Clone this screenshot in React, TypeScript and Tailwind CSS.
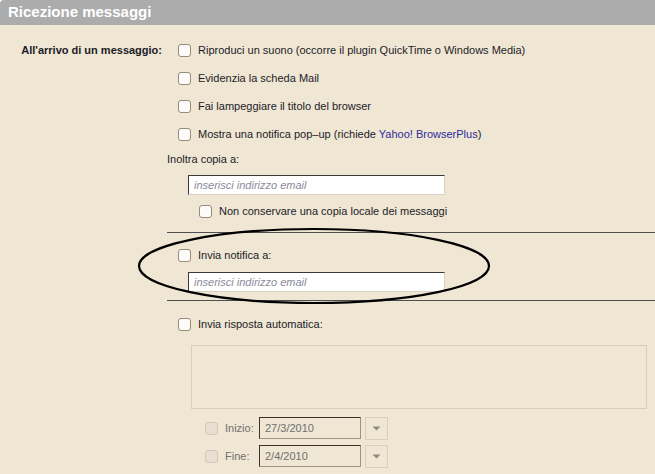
import React from 'react';

const font = { fontFamily: '"Liberation Sans", Arial, sans-serif' };

const Check = ({ disabled = false }: { disabled?: boolean }) => (
  <span
    className={
      disabled
        ? 'inline-block h-[13px] w-[13px] shrink-0 rounded-[3px] border border-[#d2c8b8] bg-[#e8dfd2]'
        : 'inline-block h-[13px] w-[13px] shrink-0 rounded-[3px] border border-[#968a79] bg-[#fdfcfa]'
    }
  />
);

const CheckRow = ({ children }: { children: React.ReactNode }) => (
  <div className="flex h-[28px] items-center gap-[7px] pl-[11px]">
    <Check />
    <span>{children}</span>
  </div>
);

const EmailInput = () => (
  <div className="ml-[21px] flex h-[20px] w-[257px] items-center border-t border-l border-t-[#3a3a3a] border-l-[#3a3a3a] border-r border-b border-r-[#d9d2c4] border-b-[#d9d2c4] bg-white pl-[5px] text-[11px] italic text-[#8a8a9a]">
    inserisci indirizzo email
  </div>
);

const DateRow = ({ label, value }: { label: string; value: string }) => (
  <div className="flex h-[28px] items-center pl-[38px]">
    <Check disabled />
    <span className="ml-[7px] w-[34px] text-[#707070]">{label}</span>
    <div className="flex h-[22px] w-[102px] items-start border-t border-l border-t-[#3a3328] border-l-[#3a3328] border-r border-b border-r-[#9c9383] border-b-[#9c9383] pl-[5px] pt-[2px] text-[#707070]">
      {value}
    </div>
    <div className="ml-[4px] flex h-[23px] w-[23px] items-center justify-center border border-[#d9cfbd]">
      <svg width="9" height="5" viewBox="0 0 9 5">
        <path d="M0.5 0.5 L8.5 0.5 L4.5 4.5 Z" fill="#8f8a82" />
      </svg>
    </div>
  </div>
);

export default function App() {
  return (
    <div className="relative min-h-screen bg-white text-[11px] text-[#1c1c28]" style={font}>
      <div className="flex h-[25px] items-center rounded-tl-[4px] bg-[#acacac] pl-[8px] text-[15px] font-bold text-white">
        Ricezione messaggi
      </div>
      <div className="grid min-h-[449px] grid-cols-[162px_1fr] gap-x-[5px] bg-[#efe6d4] pt-[11px]">
        <div className="flex h-[28px] items-center justify-end font-bold">
          All'arrivo di un messaggio:
        </div>
        <div className="flex flex-col">
          <CheckRow>Riproduci un suono (occorre il plugin QuickTime o Windows Media)</CheckRow>
          <CheckRow>Evidenzia la scheda Mail</CheckRow>
          <CheckRow>Fai lampeggiare il titolo del browser</CheckRow>
          <CheckRow>
            Mostra una notifica pop–up (richiede{' '}
            <span className="text-[#2c2c9c]">Yahoo! BrowserPlus</span>)
          </CheckRow>

          <div className="flex h-[22px] items-center">Inoltra copia a:</div>
          <div className="mt-[5px]">
            <EmailInput />
          </div>
          <div className="mt-[4px] flex h-[24px] items-center gap-[7px] pl-[32px]">
            <Check />
            <span>Non conservare una copia locale dei messaggi</span>
          </div>

          <div className="mt-[9px] border-t border-[#4f4f4f]" />

          <div className="mt-[9px] flex h-[26px] items-center gap-[7px] pl-[11px]">
            <Check />
            <span>Invia notifica a:</span>
          </div>
          <div className="mt-[4px]">
            <EmailInput />
          </div>

          <div className="mt-[8px] border-t border-[#4f4f4f]" />

          <div className="mt-[10px] flex h-[26px] items-center gap-[7px] pl-[11px]">
            <Check />
            <span>Invia risposta automatica:</span>
          </div>

          <div className="ml-[24px] mt-[8px] h-[64px] w-[456px] border border-[#d8cdb9]" />

          <div className="mt-[5px]">
            <DateRow label="Inizio:" value="27/3/2010" />
            <DateRow label="Fine:" value="2/4/2010" />
          </div>
        </div>
      </div>

      {/* hand-drawn annotation */}
      <svg className="pointer-events-none absolute left-0 top-0" width="655" height="474">
        <ellipse cx="314" cy="266" rx="175" ry="37" fill="none" stroke="#000" strokeWidth="2.2" />
      </svg>
    </div>
  );
}
